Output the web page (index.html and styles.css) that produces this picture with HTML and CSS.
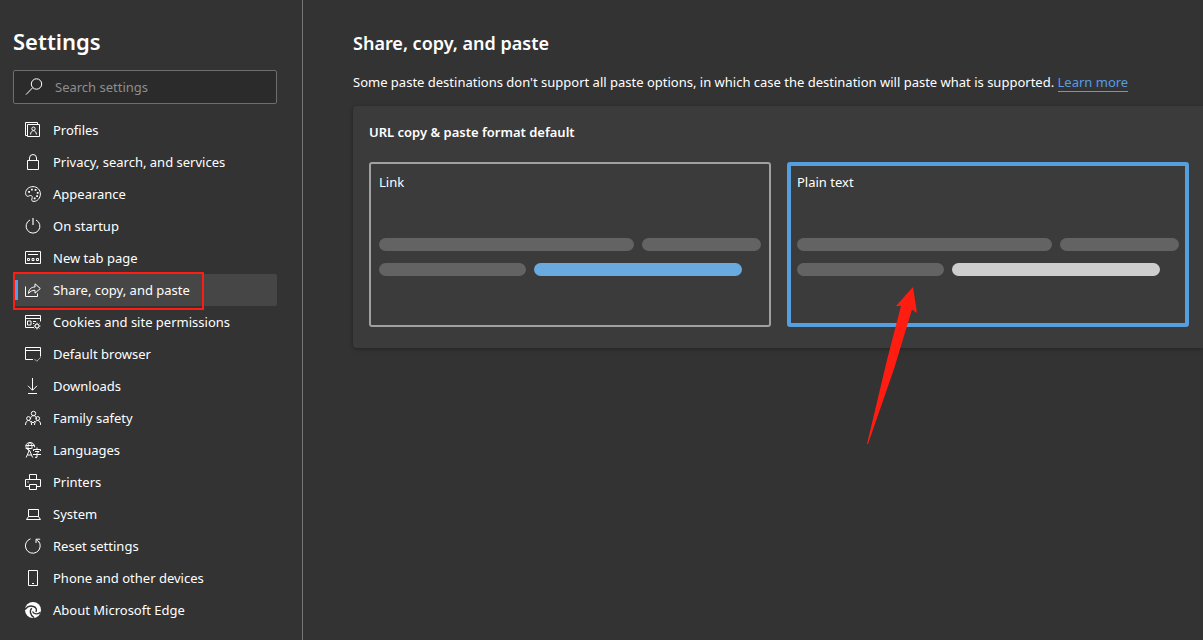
FILE: index.html
```html
<!DOCTYPE html>
<html lang="en">
<head>
<meta charset="utf-8">
<meta name="viewport" content="width=device-width, initial-scale=1">
<title>Settings</title>
<link rel="stylesheet" href="styles.css">
</head>
<body>
<div class="app">
  <aside class="sidebar">
    <h1 class="sidebar-title">Settings</h1>
    <div class="search">
      <svg class="search-icon" viewBox="0 0 18 18" aria-hidden="true"><circle cx="11.5" cy="6" r="5.2"/><path d="M7.7 9.7L1 16.6"/></svg>
      <input class="search-input" type="text" placeholder="Search settings" aria-label="Search settings">
    </div>
    <nav class="nav">
      <a class="nav-item" href="#"><svg class="icon" viewBox="0 0 16 16" aria-hidden="true"><path d="M2.5 13.5h-2v-13h12v2M2.5 2.5h12v12h-12z"/><circle cx="8.5" cy="6.700" r="1.700"/><path d="M5.600 12.500c0-5 5.800-5 5.800 0"/></svg>Profiles</a>
      <a class="nav-item" href="#"><svg class="icon" viewBox="0 0 16 16" aria-hidden="true"><path d="M2.500 6.500h11v9h-11zM4.500 6.500V4a3.500 3.500 0 0 1 7 0v2.500"/></svg>Privacy, search, and services</a>
      <a class="nav-item" href="#"><svg class="icon" viewBox="0 0 16 16" aria-hidden="true"><path d="M.6 6.500C1 3 4.300.6 8 .6c4.200 0 7.400 3.300 7.400 7.400S12.300 15.400 9 15.400c-2 0-2.700-1-2.100-2.500.8-2 .2-3.700-1.600-3.400-1.300.2-1.900 1.200-3.100.7C1 9.700.5 8.300.6 6.500z"/><path class="solid" d="M3.200 5h1.800v1.800H3.200zM6 2.700h1.800v1.800H6zM9.700 3h1.800v1.800H9.700zM11.800 6h1.800v1.800h-1.800zM11.200 9.300H13v1.800h-1.800zM8.800 11.500h1.800v1.800H8.800z"/></svg>Appearance</a>
      <a class="nav-item" href="#"><svg class="icon" viewBox="0 0 16 16" aria-hidden="true"><path d="M5 2a6.900 6.900 0 1 0 6 0"/><path class="heavy" d="M8 0v7"/></svg>On startup</a>
      <a class="nav-item" href="#"><svg class="icon" viewBox="0 0 16 16" aria-hidden="true"><path d="M.5 1.500h15v12H.5zM3 4.500h10M2.500 8.500h2v2h-2zM7 8.500h2v2H7zM11.500 8.500h2v2h-2z"/></svg>New tab page</a>
      <a class="nav-item nav-item-selected" href="#" aria-current="page"><svg class="icon" viewBox="0 0 16 16" aria-hidden="true"><path d="M.5 4.500v10h12v-3"/><path d="M3.500 11.500c.2-4 2.500-6.500 6.500-6.500V1.800L15.300 6.500 10 11.200V8.300c-2.800 0-4.800 1-6.500 3.200z"/></svg>Share, copy, and paste<span class="highlight-box"></span></a>
      <a class="nav-item" href="#"><svg class="icon" viewBox="0 0 16 16" aria-hidden="true"><path d="M9 13.500H.5v-12h15v6M.5 4.500h15M2.500 7h3.500v4H2.500zM8 7.500h3M8 9.500h1"/><circle cx="12" cy="12" r="2"/><path d="M12 8.800v1.300M12 13.900v1.500M8.800 12h1.300M13.900 12h1.500M9.700 9.700l1 1M13.400 13.400l1 1M9.700 14.300l1-1M13.400 10.600l1-1"/></svg>Cookies and site permissions</a>
      <a class="nav-item" href="#"><svg class="icon" viewBox="0 0 16 16" aria-hidden="true"><path d="M8 13.500H.5v-12h15v9M.5 4.500h15"/><path class="muted" d="M9.500 13l2.300 2.300 3.900-4"/></svg>Default browser</a>
      <a class="nav-item" href="#"><svg class="icon" viewBox="0 0 16 16" aria-hidden="true"><path d="M7.500 0v12M3 7.800l4.500 4.500L12 7.800M3 15.500h9"/></svg>Downloads</a>
      <a class="nav-item" href="#"><svg class="icon" viewBox="0 0 16 16" aria-hidden="true"><circle cx="8.500" cy="3.500" r="2.200"/><circle cx="3.500" cy="8.500" r="1.900"/><circle cx="12.700" cy="8.500" r="1.900"/><path d="M.5 15c0-6 6.200-6 6.200 0M9.500 15c0-6 6.200-6 6.200 0M5.500 9c0-4.500 6-4.500 6 0M6.200 11l1.800 2 2-2"/></svg>Family safety</a>
      <a class="nav-item" href="#"><svg class="icon" viewBox="0 0 16 16" aria-hidden="true"><path d="M4 8.500C-1 6 .5.500 5 .5c2.800 0 4.700 2 4.700 4.800M.7 3.500h8.700M.7 6.500h6M3.500 8C2.200 4.500 3.500 1 5 .5c1.500.5 2.200 3 2 6"/><path d="M1.200 15.500L4.400 8l3.200 7.500M2.500 13h3.900M12 5.500v2M8.500 9V7.500h7V9M10 9.500h4l-2 2v3.800h-2M8 12.500h8"/></svg>Languages</a>
      <a class="nav-item" href="#"><svg class="icon" viewBox="0 0 16 16" aria-hidden="true"><path d="M4.500 5.500v-5h7v5M4.500 12.500h-4v-7h15v7h-4M4.500 10.500h7v5h-7zM2.500 8h1.200"/></svg>Printers</a>
      <a class="nav-item" href="#"><svg class="icon" viewBox="0 0 16 16" aria-hidden="true"><path d="M3.500 3.500h10v7h-10zM3.500 10.500l-2 3h14l-2-3"/></svg>System</a>
      <a class="nav-item" href="#"><svg class="icon" viewBox="0 0 16 16" aria-hidden="true"><path d="M5.500.8a7.400 7.400 0 1 0 8 2.300"/><path d="M11 5V1.200h4.200M11.300 1.500l2.700 2.700"/></svg>Reset settings</a>
      <a class="nav-item" href="#"><svg class="icon" viewBox="0 0 16 16" aria-hidden="true"><path d="M3.500.5h9v15h-9zM7 13.500h2"/></svg>Phone and other devices</a>
      <a class="nav-item" href="#"><svg class="icon" viewBox="0 0 16 16" aria-hidden="true"><circle class="solid" cx="8" cy="8" r="8"/><g class="cutout"><path d="M0 7.500C2.500 4 6 3.500 8.500 4.500c2.800 1 3.600 3.300 2.300 5.300"/><path d="M6.800 6.300c-2.400 2-1.800 6.800 2.200 9.200"/><path d="M7.500 9.500c1.500 2.800 5.500 3.200 8 .8"/></g></svg>About Microsoft Edge</a>
    </nav>
  </aside>
  <main class="content">
    <h2 class="page-title">Share, copy, and paste</h2>
    <p class="intro">Some paste destinations don't support all paste options, in which case the destination will paste what is supported. <a class="link" href="#">Learn more</a></p>
    <section class="card">
      <h3 class="card-title">URL copy &amp; paste format default</h3>
      <div class="options">
        <label class="option">
          <input class="option-radio" type="radio" name="format">
          <span class="option-label">Link</span>
          <span class="bars bars-first"><span class="bar"></span><span class="bar"></span></span>
          <span class="bars bars-second"><span class="bar"></span><span class="bar bar-blue"></span></span>
        </label>
        <label class="option option-selected">
          <input class="option-radio" type="radio" name="format" checked>
          <span class="option-label">Plain text</span>
          <span class="bars bars-first"><span class="bar"></span><span class="bar"></span></span>
          <span class="bars bars-second"><span class="bar"></span><span class="bar bar-light"></span></span>
          <svg class="arrow" viewBox="0 0 51 158" aria-hidden="true"><path d="M46 0L50 26L45 22.500L27 82L1 157L0 157L20 73L34 19L29 19Z"/></svg>
        </label>
      </div>
    </section>
  </main>
</div>
</body>
</html>
```
FILE: styles.css
```css
* {
  box-sizing: border-box;
}

body {
  margin: 0;
  background: #333;
  color: #fff;
  font: 13px/20px "Segoe UI", "Noto Sans", "Open Sans", sans-serif;
}

.app {
  display: flex;
  min-height: 100vh;
}

.sidebar {
  flex: 0 0 303px;
  padding: 25px 25px 0 13px;
  border-right: 1px solid #767676;
}

.sidebar-title {
  margin: 0 0 13px;
  font-size: 22px;
  line-height: 32px;
  font-weight: 600;
}

.search {
  display: flex;
  align-items: center;
  height: 34px;
  padding: 0 11px;
  gap: 12px;
  border: 1px solid #6e6e6e;
  border-radius: 2px;
  background: #2b2b2b;
}

.search-icon {
  width: 18px;
  height: 18px;
  fill: none;
  stroke: #fff;
}

.search-input {
  flex: 1;
  min-width: 0;
  padding: 0;
  border: 0;
  outline: 0;
  background: transparent;
  color: #fff;
  font: inherit;
}

.search-input::placeholder {
  color: #8e8e8e;
  opacity: 1;
}

.nav {
  margin-top: 10px;
}

.nav-item {
  position: relative;
  display: flex;
  align-items: center;
  gap: 12px;
  height: 32px;
  padding-left: 12px;
  border-radius: 2px;
  color: #fff;
  text-decoration: none;
}

.nav-item-selected {
  background: #464646;
}

.nav-item-selected::before {
  content: "";
  position: absolute;
  top: 6px;
  left: 2px;
  width: 3px;
  height: 20px;
  background: #569de5;
}

.highlight-box {
  position: absolute;
  inset: -2px 73px -4px 0;
  border: 2px solid #ff1d12;
}

.icon {
  width: 16px;
  height: 16px;
  fill: none;
  stroke: #fff;
}

.icon .solid {
  fill: #fff;
  stroke: none;
}

.icon .heavy {
  stroke: #aaa;
  stroke-width: 2;
}

.icon .muted {
  stroke: #aaa;
}

.icon .cutout {
  stroke: #333;
  stroke-width: 1.4;
}

.content {
  flex: 1;
  min-width: 0;
  padding: 30px 0 0 50px;
}

.page-title {
  margin: 0 0 16px;
  font-size: 18px;
  line-height: 26px;
  font-weight: 600;
}

.intro {
  margin: 0 0 14px;
}

.link {
  border-bottom: 1px solid #569de5;
  color: #569de5;
  text-decoration: none;
}

.card {
  padding: 16px 14px 21px 16px;
  border-radius: 4px 0 0 4px;
  background: #3b3b3b;
  box-shadow: 0 1px 4px rgba(0, 0, 0, 0.35);
}

.card-title {
  margin: 0 0 20px;
  font-size: 13px;
  line-height: 20px;
  font-weight: 600;
}

.options {
  display: flex;
  gap: 16px;
}

.option {
  position: relative;
  flex: 1;
  height: 165px;
  padding: 8px;
  border: 2px solid #a0a0a0;
  border-radius: 3px;
}

.option-selected {
  padding: 6px;
  border: 4px solid #569fdf;
}

.option-radio {
  position: absolute;
  opacity: 0;
}

.option-label {
  display: block;
}

.bars {
  display: grid;
  gap: 8px;
}

.bars-first {
  grid-template-columns: 255fr 119fr;
  margin-top: 46px;
}

.bars-second {
  grid-template-columns: 147fr 208fr 11fr;
  margin-top: 12px;
}

.bar {
  height: 13px;
  border-radius: 7px;
  background: #636363;
}

.bar-blue {
  background: #69abe1;
}

.bar-light {
  background: #cecece;
}

.arrow {
  position: absolute;
  top: 121px;
  left: 76px;
  width: 51px;
  height: 158px;
  fill: #ff1d12;
}
```
